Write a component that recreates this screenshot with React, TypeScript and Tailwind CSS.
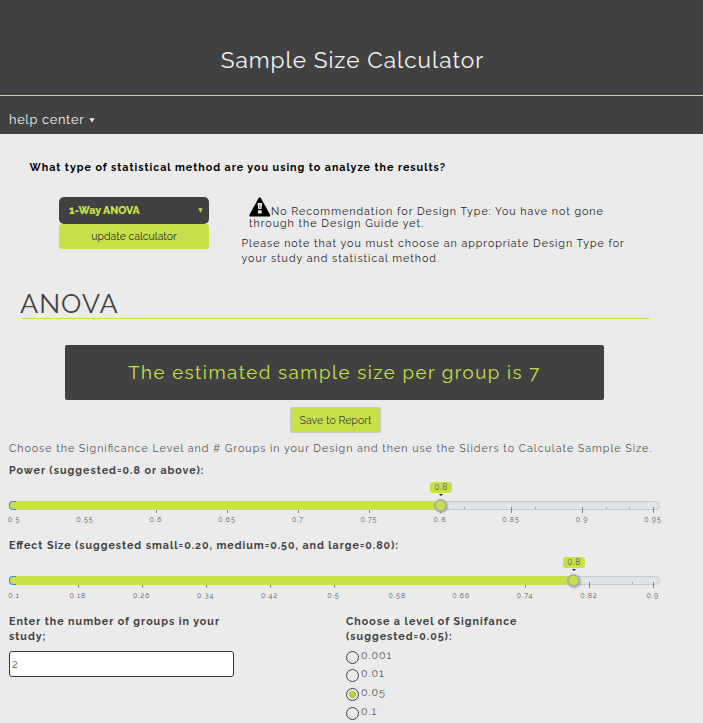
type SliderProps = {
  labels: string[];
  cell: string;
  offset: string;
  labelGap: string;
  handle: number;
  ticks: number[];
  minor: number[];
};

function Slider({ labels, cell, offset, labelGap, handle, ticks, minor }: SliderProps) {
  return (
    <div className="w-[651px]">
      <div className="relative h-[9px] w-full rounded-[5px] border border-[#c6c8ca] bg-[#e2e5e7]">
        <div className="absolute -left-px -top-px h-[9px] w-[7px] rounded-l-[4px] border border-r-0 border-[#428bca] bg-[#c8e14b]" />
        {minor.map((x) => (
          <div key={x} className="absolute bottom-0 h-[2px] w-px bg-[#a8a8a8]" style={{ left: x - 10 }} />
        ))}
        {ticks.map((x) => (
          <div key={x} className="absolute top-[5px] h-[6px] w-px bg-[#868686]" style={{ left: x - 10 }} />
        ))}
        <div className="absolute -top-px left-[6px] h-[9px] bg-[#c8e14b]" style={{ width: handle - 16 }} />
        <div
          className="absolute top-[-3px] h-[13px] w-[13px] rounded-full border-2 border-[#b0b0a4] bg-[#c8e14b] shadow-[1px_1px_2px_rgba(0,0,0,0.25)]"
          style={{ left: handle - 17 }}
        />
        <div
          className="absolute top-[-20px] flex h-[11px] w-[22px] items-center justify-center rounded-[3px] bg-[#c8e14b] text-[8.5px] leading-[11px] tracking-[0.6px] text-[#555]"
          style={{ left: handle - 21 }}
        >
          0.8
          <div className="absolute left-[9px] top-[12px] h-0 w-0 border-x-[2px] border-t-[2px] border-x-transparent border-t-[#222]" />
        </div>
      </div>
      <div className={`flex ${labelGap} ${offset} h-[9px] text-[7px] leading-[10px] text-[#555]`}>
        {labels.map((l) => (
          <span key={l} className={`${cell} shrink-0 text-center`}>
            {l}
          </span>
        ))}
      </div>
    </div>
  );
}

function WarningIcon() {
  return (
    <svg width="22" height="20" viewBox="0 0 22 20" className="shrink-0">
      <path d="M9.6 1 Q10.7 -0.6 11.8 1 L21 17.6 Q21.8 19.6 20 19.6 H1.6 Q-0.2 19.6 0.6 17.6 Z" fill="#000" />
      <path d="M8.4 6 H13.2 L12.4 12 H9.2 Z M9 13.3 H12.6 V16.4 H9 Z" fill="#ebebeb" />
      <path d="M10.8 7.4 V10.8" stroke="#555" strokeWidth="0.8" />
    </svg>
  );
}

const levels = [
  { label: "0.001", row: "h-[18px]" },
  { label: "0.01", row: "h-[19px]" },
  { label: "0.05", row: "h-[19px]" },
  { label: "0.1", row: "h-[19px]" },
];

export default function App() {
  return (
    <div className="h-[723px] w-[703px] overflow-hidden bg-[#ebebeb] font-['Raleway','Lato',sans-serif] text-[10.667px] leading-[15px] tracking-[1px] text-[#414141] [font-feature-settings:'liga'_1]">
      <header className="h-[134px] bg-[#414141] text-[#f2f2f2]">
        <h1 className="h-[96px] border-b border-[#c8e14b] pl-[2px] pt-[45px] text-center text-[22.6px] leading-[30px]">
          Sample Size Calculator
        </h1>
        <nav className="flex items-center gap-[5px] pl-[9px] pt-[14px] text-[12.8px] leading-[20px] tracking-[0.7px]">
          <span>help center</span>
          <svg width="6" height="5" viewBox="0 0 6 5">
            <path d="M0.3 0.2H5.7L3 4.4Z" fill="#ebebeb" />
          </svg>
        </nav>
      </header>

      <p className="pl-[29.5px] pt-[26px] font-bold tracking-[0.99px] text-black">
        What type of statistical method are you using to analyze the results?
      </p>

      <section className="flex pl-[59px] pt-[22px]">
        <div className="w-[150px] tracking-normal">
          <div className="flex h-[27px] items-center justify-between rounded-[5px] bg-[#414141] pl-[10px] pr-[6px] font-extrabold text-[#c8e14b] [font-feature-settings:'onum'_1]">
            1-Way ANOVA
            <svg width="5" height="5" viewBox="0 0 5 5">
              <path d="M0.3 0.3H4.7L2.5 4.8Z" fill="#c8e14b" />
            </svg>
          </div>
          <div className="h-[25px] rounded-[3px] bg-[#c8e14b] text-center text-[10.5px] leading-[25px] text-[#2b2b2b]">
            update calculator
          </div>
        </div>
        <div className="ml-[32.5px] w-[420px] whitespace-nowrap text-[#222]">
          <div className="flex h-[20px] items-end pl-[7.5px] leading-[12px]">
            <WarningIcon />
            <span>No Recommendation for Design Type: You have not gone</span>
          </div>
          <p className="pl-[7.5px] leading-[12px]">through the Design Guide yet.</p>
          <p className="pt-[7px] tracking-[0.99px]">
            Please note that you must choose an appropriate Design Type for
            <br />
            your study and statistical method.
          </p>
        </div>
      </section>

      <h2 className="ml-[21px] mt-[22px] h-[31px] w-[628px] border-b border-[#c8e14b] text-[27px] font-normal leading-[32px]">
        <span className="-ml-px">ANOVA</span>
      </h2>

      <div className="ml-[65px] mt-[26px] h-[55px] w-[539px] rounded-[2px] bg-[#414141] text-center text-[18.667px] leading-[55px] tracking-[1.5px] text-[#c8e14b]">
        The estimated sample size per group is 7
      </div>
      <div className="ml-[290px] mt-[7px] h-[26px] w-[91px] rounded-[2px] border border-[#c8c8c8] bg-[#c8e14b] text-center text-[10.6px] leading-[25px] tracking-normal">
        Save to Report
      </div>

      <main className="pl-[9px]">
        <p className="mt-[8px] whitespace-nowrap tracking-[0.98px] text-[#555]">
          Choose the Significance Level and # Groups in your Design and then use the Sliders to Calculate Sample Size.
        </p>
        <p className="mb-[23px] mt-[7px] font-bold">Power (suggested=0.8 or above):</p>
        <Slider
          labels={["0.5", "0.55", "0.6", "0.65", "0.7", "0.75", "0.8", "0.85", "0.9", "0.95"]}
          cell="w-[71px]"
          offset="-ml-[30.5px]"
          labelGap="mt-[5px]"
          handle={441}
          ticks={[156, 227, 298, 369, 440, 511, 582, 653]}
          minor={[464, 535, 606, 629]}
        />
        <p className="mb-[23px] mt-[14px] font-bold tracking-[0.96px]">
          Effect Size (suggested small=0.20, medium=0.50, and large=0.80):
        </p>
        <Slider
          labels={["0.1", "0.18", "0.26", "0.34", "0.42", "0.5", "0.58", "0.66", "0.74", "0.82", "0.9"]}
          cell="w-[63.9px]"
          offset="-ml-[27px]"
          labelGap="mt-[6px]"
          handle={574}
          ticks={[78, 142, 206, 270, 334, 525, 589, 653]}
          minor={[632]}
        />

        <div className="mt-[14px] flex">
          <div className="w-[337px]">
            <p className="font-bold">
              Enter the number of groups in your
              <br />
              study;
            </p>
            <div className="mt-[7px] h-[26px] w-[225px] rounded-[3px] border border-[#333] bg-white pl-[2px] leading-[25px] text-[#555]">
              2
            </div>
          </div>
          <div>
            <p className="font-bold">
              Choose a level of Signifance
              <br />
              (suggested=0.05):
            </p>
            <div className="pt-[4px]">
              {levels.map(({ label, row }) => (
                <div key={label} className={`flex gap-[2px] ${row}`}>
                  <div className="mt-[3px] flex h-[13px] w-[13px] items-center justify-center rounded-full border-[1.4px] border-[#414141]">
                    {label === "0.05" && (
                      <div className="h-[7px] w-[7px] rounded-full border border-[#a3b83c] bg-[#b9d636]" />
                    )}
                  </div>
                  <span className="leading-[14px] text-[#555]">{label}</span>
                </div>
              ))}
            </div>
          </div>
        </div>
      </main>
    </div>
  );
}
